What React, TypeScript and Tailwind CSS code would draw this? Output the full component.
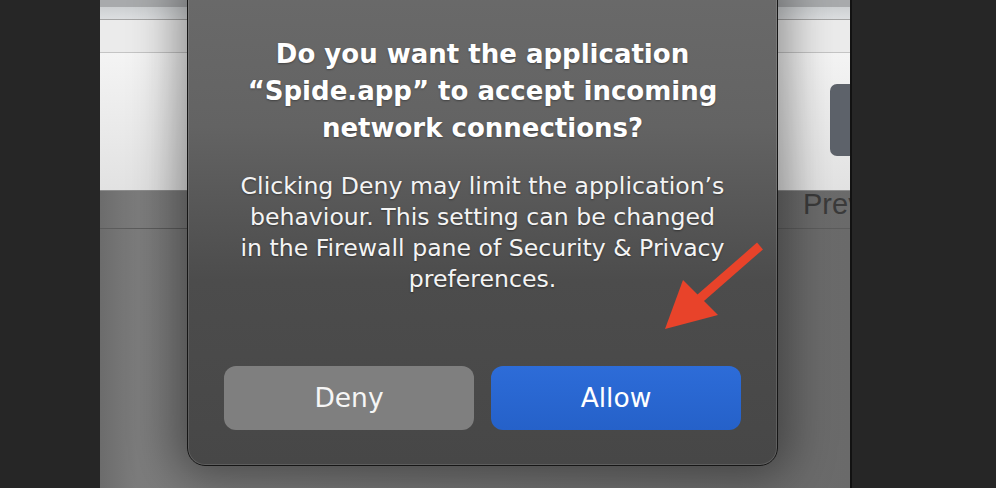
export default function App() {
  return (
    <div className="relative flex h-[488px] w-[996px] overflow-hidden bg-[#262626] font-['DejaVu_Sans',Verdana,sans-serif]">
      <div className="w-[100px] shrink-0" />

      {/* window behind the alert */}
      <div className="flex w-[752px] shrink-0 flex-col border-r-2 border-[#121212] bg-[linear-gradient(to_right,#6c6c6c_0%,#7c7c7c_5%,#6a6a6a_100%)]">
        <div className="h-[7px] bg-[#a8aaac]" />
        <div className="h-[13px] border-b border-[#a4a4a4] bg-gradient-to-b from-[#cdd0d2] to-[#dcdee0]" />
        <div className="h-[33px] border-b border-[#c4c4c4] bg-[#ebebeb]" />
        <div className="relative z-10 flex h-[138px] justify-end border-b border-[#8c8c8c] bg-gradient-to-b from-[#f4f4f4] to-[#e2e2e2] pt-[31px]">
          <div className="h-[72px] w-[20px] rounded-l-[7px] bg-[#5d626a]" />
        </div>
        <div className="flex h-[38px] overflow-hidden border-b border-[#5c5c5c] pl-[703px]">
          <span className="-mt-[8px] whitespace-nowrap font-['Liberation_Sans',Arial,sans-serif] text-[29px] text-[#3a3a3a]">
            Preview
          </span>
        </div>
        <div className="flex-1" />
      </div>
      <div className="flex-1" />

      {/* alert */}
      <div className="absolute left-[187px] top-[-20px] z-20 flex h-[486px] w-[591px] flex-col items-center rounded-[18px] border border-[#161616] bg-[linear-gradient(to_bottom,#6a6a6a_0%,#636363_30%,#4c4c4c_62%,#474747_100%)] px-[36px] pb-[35px] pt-[55px] shadow-[inset_0_0_0_1px_rgba(255,255,255,0.13),0_0_45px_12px_rgba(0,0,0,0.38)]">
        <h1 className="whitespace-nowrap text-center text-[26px] font-bold leading-[37px] text-white [text-shadow:0_1px_2px_rgba(0,0,0,0.35)]">
          Do you want the application
          <br />
          “Spide.app” to accept incoming
          <br />
          network connections?
        </h1>
        <p className="mt-[24px] whitespace-nowrap text-center text-[23.6px] leading-[31px] text-[#f4f4f4] [text-shadow:0_1px_2px_rgba(0,0,0,0.4)]">
          Clicking Deny may limit the application’s
          <br />
          behaviour. This setting can be changed
          <br />
          in the Firewall pane of Security &amp; Privacy
          <br />
          preferences.
        </p>
        <div className="mt-auto flex w-full gap-[17px]">
          <button className="h-[64px] flex-1 rounded-[12px] bg-[#7f7f7f] text-[26.5px] text-[#f6f6f6]">
            Deny
          </button>
          <button className="h-[64px] flex-1 rounded-[12px] bg-gradient-to-b from-[#2d6cd8] to-[#2561c9] text-[26.5px] text-white">
            Allow
          </button>
        </div>
      </div>

      {/* red arrow */}
      <svg
        className="pointer-events-none absolute left-0 top-0 z-30"
        width="996"
        height="488"
        viewBox="0 0 996 488"
      >
        <line x1="760" y1="246" x2="697" y2="301" stroke="#e8432a" strokeWidth="9" />
        <polygon points="665,329 683,280 718,315" fill="#e8432a" />
      </svg>
    </div>
  );
}
